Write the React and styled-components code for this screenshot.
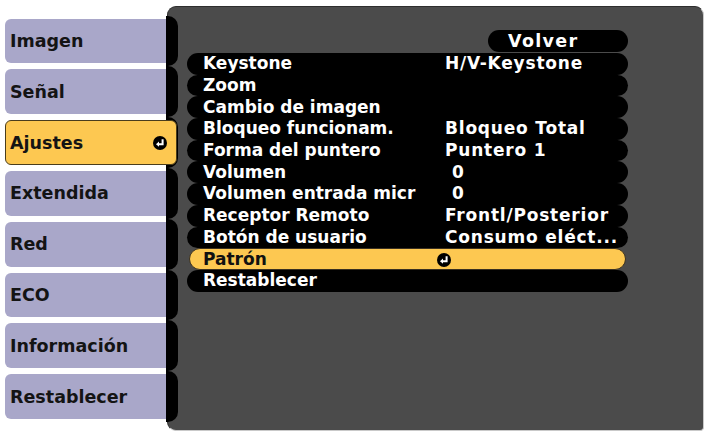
import styled, { createGlobalStyle } from 'styled-components'

const GlobalStyle = createGlobalStyle`
  html, body {
    margin: 0;
    background: #ffffff;
  }
  body {
    font-family: 'DejaVu Sans', 'Liberation Sans', sans-serif;
  }
`

const tabs = ['Imagen', 'Señal', 'Ajustes', 'Extendida', 'Red', 'ECO', 'Información', 'Restablecer']

const items = [
  { label: 'Keystone', value: 'H/V-Keystone' },
  { label: 'Zoom' },
  { label: 'Cambio de imagen' },
  { label: 'Bloqueo funcionam.', value: 'Bloqueo Total' },
  { label: 'Forma del puntero', value: 'Puntero 1' },
  { label: 'Volumen', value: '0', indent: true },
  { label: 'Volumen entrada micr', value: '0', indent: true },
  { label: 'Receptor Remoto', value: 'Frontl/Posterior' },
  { label: 'Botón de usuario', value: 'Consumo eléct...' },
  { label: 'Patrón', enter: true },
  { label: 'Restablecer' },
]

const Screen = styled.div`
  display: flex;
  box-sizing: border-box;
  width: 706px;
  height: 437px;
  padding: 6px 2px 6px 5px;
`

const Sidebar = styled.nav`
  position: relative;
  z-index: 1;
  flex: 0 0 173px;
  margin-right: -11px;
  padding-top: 9.6px;
  display: flex;
  flex-direction: column;
`

const TabRow = styled.div`
  display: flex;
  height: 50.8px;
`

const TabBody = styled.div`
  position: relative;
  z-index: 1;
  flex: 1;
  display: flex;
  align-items: center;
  justify-content: space-between;
  box-sizing: border-box;
  margin: 3px ${p => (p.$active ? '-11px' : '0')} 3px 0;
  padding: 0 9px 0 ${p => (p.$active ? '4px' : '5px')};
  background: ${p => (p.$active ? '#fdc851' : '#a9a7c9')};
  border: ${p => (p.$active ? '1px solid #4a3d1c' : 'none')};
  border-radius: ${p => (p.$active ? '6px' : '6px 0 0 6px')};
  color: #141414;
  font-weight: bold;
  font-size: 17.5px;
`

const TabCap = styled.div`
  flex: 0 0 12px;
  background: #000;
  border-radius: 0 10px 10px 0;
`

const Panel = styled.main`
  flex: 1;
  box-sizing: border-box;
  display: flex;
  flex-direction: column;
  padding: 23px 75px 0 19px;
  background: #4b4b4b;
  border: 1px solid #c9c9c9;
  border-top-color: #2e2e2e;
  border-left-color: #2e2e2e;
  border-radius: 9px 9px 4px 9px;
`

const BackPill = styled.div`
  align-self: flex-end;
  width: 140px;
  height: 22px;
  box-sizing: border-box;
  padding-left: 20px;
  background: #000;
  border-radius: 11px;
  color: #fff;
  font-weight: bold;
  font-size: 17.5px;
  letter-spacing: 1.3px;
  line-height: 22px;
`

const List = styled.div`
  display: flex;
  flex-direction: column;
  margin-top: 1px;
`

const Row = styled.div`
  display: grid;
  grid-template-columns: 242px 1fr;
  align-items: center;
  box-sizing: border-box;
  height: 21.7px;
  margin: 0 ${p => (p.$selected ? '2px' : '0')};
  padding-left: ${p => (p.$selected ? '13px' : '16px')};
  background: ${p => (p.$selected ? '#fdc851' : '#000')};
  border: ${p => (p.$selected ? '1px solid #3a3020' : 'none')};
  border-radius: 11px;
  color: ${p => (p.$selected ? '#111' : '#fff')};
  font-weight: bold;
  font-size: 17px;
  line-height: 21px;
  white-space: nowrap;
`

const Value = styled.span`
  display: flex;
  align-items: center;
  padding-left: ${p => (p.$indent ? '7px' : '0')};
  letter-spacing: 0.8px;
`

const EnterWrap = styled.span`
  display: inline-flex;
  margin-left: ${p => p.$shift || '0'};
`

function EnterIcon({ shift }) {
  return (
    <EnterWrap $shift={shift}>
      <svg width="14" height="14" viewBox="0 0 14 14" aria-hidden="true">
        <circle cx="7" cy="7" r="7" fill="#000" />
        <path d="M9.6 3.2 V8.2 H5.2" fill="none" stroke="#fff" strokeWidth="2" />
        <path d="M3 8.2 L6 5.6 V10.8 Z" fill="#fff" />
      </svg>
    </EnterWrap>
  )
}

export default function App() {
  return (
    <>
      <GlobalStyle />
      <Screen>
        <Sidebar>
          {tabs.map(t => (
            <TabRow key={t}>
              <TabBody $active={t === 'Ajustes'}>
                {t}
                {t === 'Ajustes' && <EnterIcon />}
              </TabBody>
              <TabCap />
            </TabRow>
          ))}
        </Sidebar>
        <Panel>
          <BackPill>Volver</BackPill>
          <List>
            {items.map(it => (
              <Row key={it.label} $selected={it.enter}>
                <span>{it.label}</span>
                <Value $indent={it.indent}>
                  {it.enter ? <EnterIcon shift="-8px" /> : it.value}
                </Value>
              </Row>
            ))}
          </List>
        </Panel>
      </Screen>
    </>
  )
}
